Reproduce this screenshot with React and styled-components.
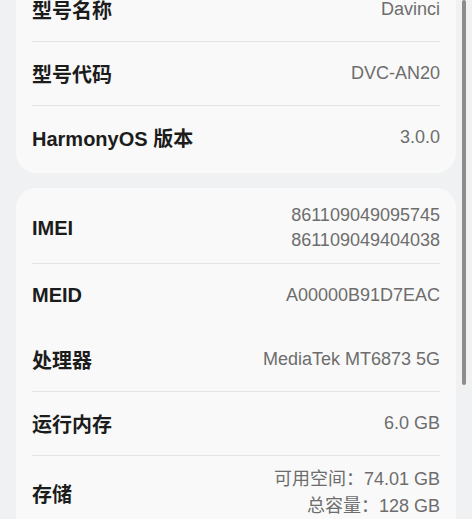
import React from "react";
import styled, { createGlobalStyle } from "styled-components";

const GlobalStyle = createGlobalStyle`
  html, body {
    margin: 0;
    padding: 0;
    background: #f0f1f2;
  }
  body {
    font-family: "Liberation Sans", "Noto Sans CJK SC", sans-serif;
  }
`;

const groups = [
  [
    { label: "型号名称", value: ["Davinci"] },
    { label: "型号代码", value: ["DVC-AN20"] },
    { label: "HarmonyOS 版本", value: ["3.0.0"] },
  ],
  [
    { label: "IMEI", value: ["861109049095745", "861109049404038"] },
    { label: "MEID", value: ["A00000B91D7EAC"] },
    { label: "处理器", value: ["MediaTek MT6873 5G"], plain: true },
    { label: "运行内存", value: ["6.0 GB"] },
    { label: "存储", value: ["可用空间：74.01 GB", "总容量：128 GB"], tall: true },
  ],
];

export default function App() {
  return (
    <Page>
      <GlobalStyle />
      <Content>
        {groups.map((rows, i) => (
          <Card key={i}>
            {rows.map((r, j) => (
              <Row key={r.label} $divider={j > 0 && !r.plain}>
                <Label>{r.label}</Label>
                <Value $tall={r.tall}>
                  {r.value.map((v) => (
                    <span key={v}>{v}</span>
                  ))}
                </Value>
              </Row>
            ))}
          </Card>
        ))}
      </Content>
      <ScrollThumb />
    </Page>
  );
}

const Page = styled.div`
  position: relative;
  height: 519px;
  overflow: hidden;
  background: #f0f1f2;
`;

const Content = styled.div`
  display: flex;
  flex-direction: column;
  gap: 15px;
  margin-top: -27px;
  padding: 0 16px;
`;

const Card = styled.div`
  background: #f9f9f9;
  border-radius: 20px;
  padding: 4px 16px;
`;

const Row = styled.div`
  display: flex;
  align-items: center;
  justify-content: space-between;
  min-height: 64px;
  box-sizing: border-box;
  padding: 10px 0;
  border-top: 1px solid ${(p) => (p.$divider ? "#e4e5e7" : "transparent")};
`;

const Label = styled.div`
  font-size: 20px;
  font-weight: 600;
  color: #1c1c1c;
`;

const Value = styled.div`
  display: flex;
  flex-direction: column;
  align-items: flex-end;
  font-size: 18px;
  line-height: ${(p) => (p.$tall ? "27px" : "25px")};
  color: #6d6d6d;
  text-align: right;
`;

const ScrollThumb = styled.div`
  position: absolute;
  top: 0;
  right: 6px;
  width: 4px;
  height: 385px;
  border-radius: 2px;
  background: #8c8c8c;
`;
